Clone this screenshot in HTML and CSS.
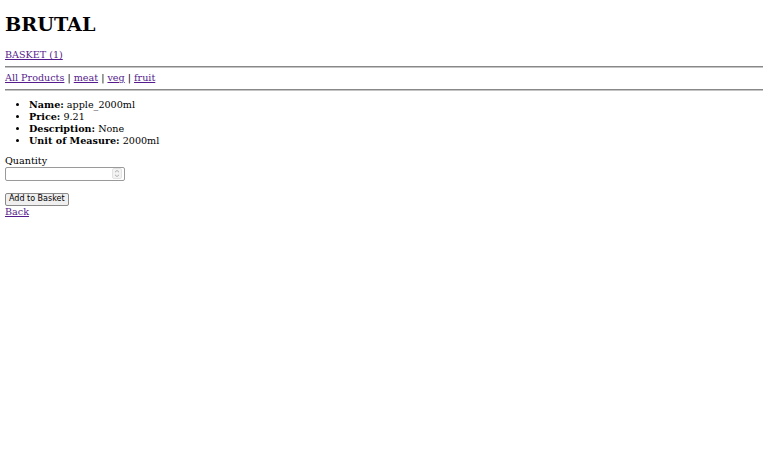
FILE: index.html
```html
<!DOCTYPE html>
<html>
<head>
<meta charset="utf-8">
<title>BRUTAL</title>
<link rel="stylesheet" href="styles.css">
</head>
<body class="page">
<h1 class="title">BRUTAL</h1>
<div class="basket"><a class="link" href="#">BASKET (1)</a></div>
<hr class="rule">
<div class="nav"><a class="link" href="#">All Products</a> | <a class="link" href="#">meat</a> | <a class="link" href="#">veg</a> | <a class="link" href="#">fruit</a></div>
<hr class="rule">
<ul class="details">
<li><b>Name:</b> apple_2000ml</li>
<li><b>Price:</b> 9.21</li>
<li><b>Description:</b> None</li>
<li><b>Unit of Measure:</b> 2000ml</li>
</ul>
<form class="add-form">
<label class="qty-label" for="qty">Quantity</label><br>
<span class="qty-wrap"><input class="qty" id="qty" type="number"><svg class="spin" width="10" height="11" viewBox="0 0 10 11"><rect x="0.5" y="0.5" width="9" height="10" rx="1.5" fill="#f3f3f3" stroke="#e2e2e2"/><path d="M3 4.2 L5 2.4 L7 4.2 M3 6.8 L5 8.6 L7 6.8" fill="none" stroke="#9a9a9a" stroke-width="0.8"/></svg></span><br><br>
<button class="add-btn" type="button">Add to Basket</button>
</form>
<a class="link" href="#">Back</a>
</body>
</html>
```
FILE: styles.css
```css
html {
  background: #fff;
}
.page {
  margin: 5px;
  font-family: "DejaVu Serif", serif;
  font-size: 9.6px;
  line-height: 12px;
  color: #000;
}
.title {
  font-size: 19.2px;
  line-height: 22px;
  margin: 9px 0 13px;
  font-weight: bold;
}
.link {
  color: #551a8b;
  text-decoration: underline;
}
.rule {
  border: none;
  border-top: 1px solid #888;
  border-bottom: 1px solid #c4c4c4;
  height: 0;
  margin: 4.5px 0;
}
.details {
  margin: 8px 0 8px;
  padding-left: 24px;
}
.add-form {
  margin: 0;
}
.qty-wrap {
  position: relative;
  display: inline-block;
  vertical-align: top;
}
.qty {
  display: block;
  box-sizing: border-box;
  width: 120px;
  height: 14px;
  margin: 0;
  padding: 0 2px;
  border: 1px solid #9a9a9a;
  border-radius: 2px;
  font-size: 8px;
  font-family: "DejaVu Sans", sans-serif;
  -moz-appearance: textfield;
}
.qty::-webkit-inner-spin-button,
.qty::-webkit-outer-spin-button {
  -webkit-appearance: none;
  margin: 0;
}
.spin {
  position: absolute;
  right: 3px;
  top: 1.5px;
}
.add-btn {
  box-sizing: border-box;
  height: 13px;
  margin: 0;
  padding: 0 3px;
  font-family: "DejaVu Sans", sans-serif;
  font-size: 8px;
  line-height: 10px;
  color: #000;
  background: #efefef;
  border: 1px solid #8a8a8a;
  border-radius: 2px;
  vertical-align: top;
}
```
